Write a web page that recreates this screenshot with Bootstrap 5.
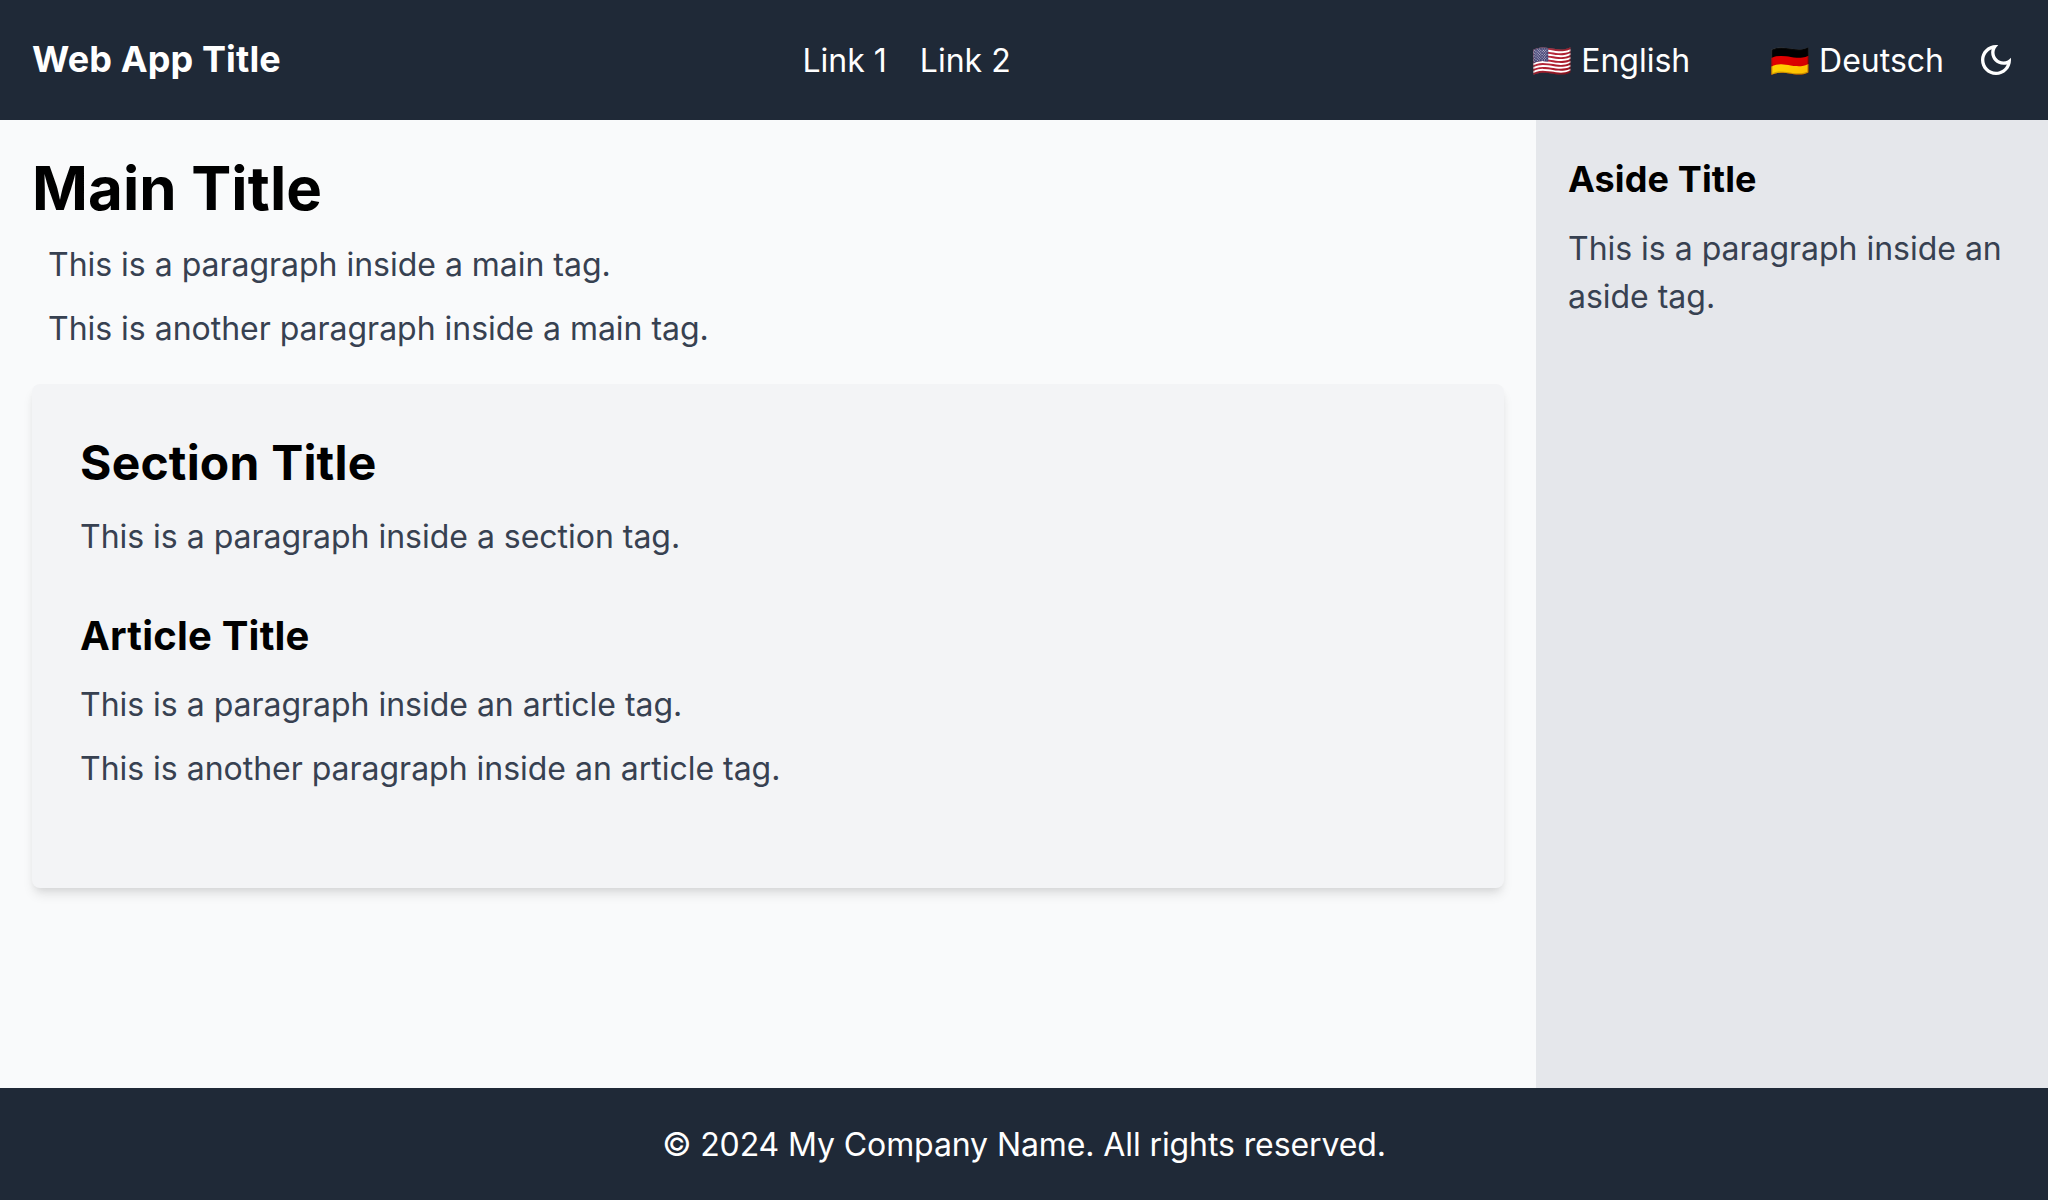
<!DOCTYPE html>
<html lang="en">
<head>
<meta charset="utf-8">
<meta name="viewport" content="width=device-width, initial-scale=1">
<title>Web App Title</title>
<link href="https://cdn.jsdelivr.net/npm/bootstrap@5.3.0/dist/css/bootstrap.min.css" rel="stylesheet">
<style>
  body { font-family: Inter, "Noto Color Emoji", sans-serif; font-size: 32px; line-height: 48px; background: #f9fafb; color: #000; }
  h1, h2, h3, h4 { margin-bottom: 16px; }
  h1, h2, h3, h4, .app-title { font-weight: 700; color: inherit; letter-spacing: .12px; }
  h1 { font-size: 60px; line-height: 72px; }
  h2 { font-size: 48px; line-height: 62px; padding-bottom: 2px; letter-spacing: .2px; }
  h3 { font-size: 40px; line-height: 56px; letter-spacing: .2px; }
  h4, .app-title { font-size: 36px; line-height: 54px; padding-bottom: 2px; }
  p { color: #374151; padding-top: 1px; margin-bottom: 15px; letter-spacing: -.02px; }
  .bar { background: #1f2937; color: #fff; padding: 32px; }
  .app-header { height: 120px; }
  .app-footer { padding: 33px 32px 31px; letter-spacing: -.1px; }
  .bar a { color: #fff; text-decoration: none; }
  .page-links, .lang-list { padding-top: 2px; }
  .page-links { gap: 33px; }
  .tools { gap: 32px; }
  .lang-list { gap: 80px; }
  .app-main { padding: 32px; }
  .lead-in { padding-left: 16px; }
  .panel { background: #f3f4f6; border-radius: 8px; padding: 48px; margin-top: 31px; box-shadow: 0 8px 12px -2px rgba(0,0,0,.1), 0 4px 8px -4px rgba(0,0,0,.1); }
  .panel article { margin: 47px 0; }
  .app-aside { background: #e5e7eb; padding: 32px; }
</style>
<script src="https://cdn.jsdelivr.net/npm/bootstrap@5.3.0/dist/js/bootstrap.bundle.min.js"></script>
</head>
<body class="d-flex flex-column vh-100">
  <header class="bar app-header d-flex align-items-center justify-content-between">
    <div class="app-title">Web App Title</div>
    <nav class="page-links d-flex">
      <a href="#">Link 1</a>
      <a href="#">Link 2</a>
    </nav>
    <div class="tools d-flex align-items-center">
      <div class="lang-list d-flex">
        <a href="#" lang="en">🇺🇸 English</a>
        <a href="#" lang="de">🇩🇪 Deutsch</a>
      </div>
      <a href="#" class="d-flex" aria-label="Dark mode">
        <svg width="40" height="40" viewBox="0 0 24 24" fill="currentColor"><path d="M9.37,5.51C9.19,6.15,9.1,6.82,9.1,7.5c0,4.08,3.32,7.4,7.4,7.4c0.68,0,1.35-0.09,1.99-0.27C17.45,17.19,14.93,19,12,19c-3.86,0-7-3.14-7-7C5,9.07,6.81,6.55,9.37,5.51z M12,3c-4.97,0-9,4.03-9,9s4.03,9,9,9s9-4.03,9-9c0-0.46-0.04-0.92-0.1-1.36c-0.98,1.37-2.58,2.26-4.4,2.26c-2.98,0-5.4-2.42-5.4-5.4c0-1.81,0.89-3.42,2.26-4.4C12.92,3.04,12.46,3,12,3L12,3z"/></svg>
      </a>
    </div>
  </header>
  <div class="row g-0 flex-grow-1">
    <main class="app-main col-9">
      <h1>Main Title</h1>
      <p class="lead-in">This is a paragraph inside a main tag.</p>
      <p class="lead-in">This is another paragraph inside a main tag.</p>
      <section class="panel">
        <h2>Section Title</h2>
        <p>This is a paragraph inside a section tag.</p>
        <article>
          <h3>Article Title</h3>
          <p>This is a paragraph inside an article tag.</p>
          <p>This is another paragraph inside an article tag.</p>
        </article>
      </section>
    </main>
    <aside class="app-aside col-3">
      <h4>Aside Title</h4>
      <p>This is a paragraph inside an aside tag.</p>
    </aside>
  </div>
  <footer class="bar app-footer text-center">© 2024 My Company Name. All rights reserved.</footer>
</body>
</html>
